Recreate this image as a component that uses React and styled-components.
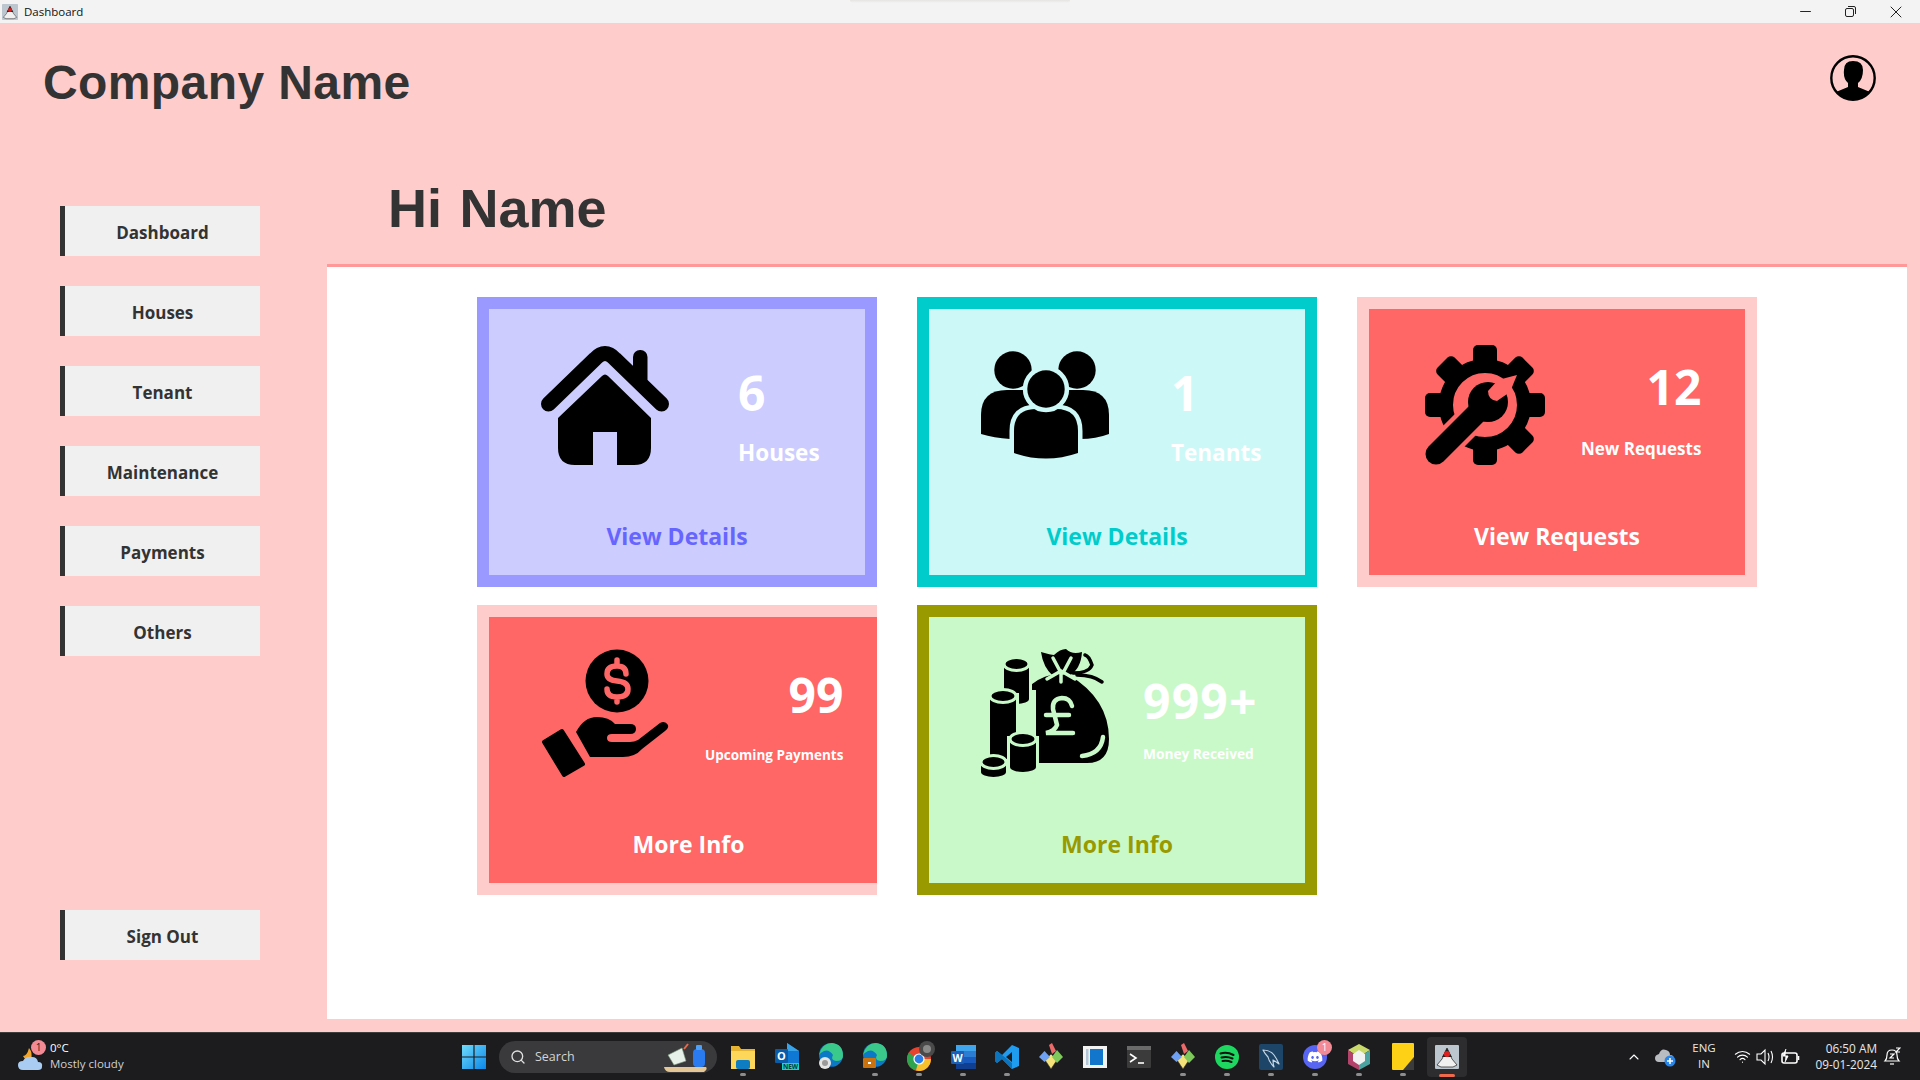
import React from "react";
import styled, { createGlobalStyle } from "styled-components";
import { FaDiscord, FaSpotify } from "react-icons/fa";
import { Search, Minus, X, ChevronUp, Wifi } from "lucide-react";

const uiFont = `"Open Sans", "Noto Sans", sans-serif`;

const GlobalStyle = createGlobalStyle`
  html, body {
    margin: 0;
    padding: 0;
    width: 1920px;
    height: 1080px;
    overflow: hidden;
    font-family: ${uiFont};
  }
`;

const Screen = styled.div`
  width: 1920px;
  height: 1080px;
  display: flex;
  flex-direction: column;
`;

const TitleBar = styled.div`
  height: 23px;
  background: #f3f3f3;
  display: flex;
  align-items: center;
  padding-left: 2px;
  flex-shrink: 0;
  position: relative;

  &::after {
    content: "";
    position: absolute;
    top: 0;
    left: 850px;
    width: 220px;
    height: 3px;
    background: linear-gradient(#e6e4e2, #f3f3f3);
    border-radius: 0 0 6px 6px;
  }
`;

const TitleText = styled.span`
  font-size: 11.5px;
  color: #111;
  margin-left: 6px;
`;

const WindowButtons = styled.div`
  margin-left: auto;
  display: flex;
  align-items: center;
  padding-right: 2px;
  height: 100%;
`;

const WindowButton = styled.div`
  width: 45px;
  display: flex;
  align-items: center;
  justify-content: center;
  color: #222;
`;

const Main = styled.div`
  flex: 1;
  background: #ffcccc;
  display: flex;
  flex-direction: column;
  min-height: 0;
`;

const Header = styled.header`
  height: 144px;
  flex-shrink: 0;
  display: flex;
  justify-content: space-between;
  align-items: flex-start;
  padding: 32px 43px 0 43px;
  box-sizing: border-box;
`;

const Brand = styled.h1`
  margin: 0;
  font: bold 48px/55px "Liberation Sans", sans-serif;
  letter-spacing: 0.4px;
  color: #333;
`;

const Avatar = styled.svg`
  width: 46px;
  height: 46px;
  margin: 0 1px 0 0;
`;

const Body = styled.div`
  flex: 1;
  display: flex;
  min-height: 0;
`;

const Sidebar = styled.nav`
  width: 327px;
  flex-shrink: 0;
  box-sizing: border-box;
  padding: 39px 0 72px 60px;
  display: flex;
  flex-direction: column;
  gap: 30px;
`;

const NavButton = styled.button`
  width: 200px;
  height: 50px;
  box-sizing: border-box;
  border: 0;
  border-left: 5px solid #333;
  background: #f0f0f0;
  color: #333;
  font: bold 17px ${uiFont};
  padding: 2px 0 0;
  margin-top: ${(p) => (p.$bottom ? "auto" : "0")};
`;

const Content = styled.section`
  flex: 1;
  display: flex;
  flex-direction: column;
  margin: 0 13px 13px 0;
`;

const Greeting = styled.h2`
  margin: 0;
  height: 97px;
  box-sizing: border-box;
  padding: 10px 0 0 61px;
  font: bold 54px/62px "Liberation Sans", sans-serif;
  word-spacing: 2.5px;
  color: #333;
`;

const Panel = styled.div`
  flex: 1;
  background: #fff;
  border-top: 3px solid #ff9999;
  padding: 30px 0 0 150px;
  display: grid;
  grid-template-columns: repeat(3, 400px);
  grid-auto-rows: 290px;
  column-gap: 40px;
  row-gap: 18px;
  align-content: start;
`;

const Card = styled.article`
  box-sizing: border-box;
  width: 400px;
  height: 290px;
  background: ${(p) => p.$fill};
  border: 12px solid ${(p) => p.$frame};
  border-right-width: ${(p) => (p.$open ? "0" : "12px")};
  display: flex;
  flex-direction: column;
`;

const CardTop = styled.div`
  display: flex;
  align-items: flex-start;
  padding: 32px 0 0 52px;
`;

const IconSlot = styled.div`
  width: 128px;
  height: 128px;
  flex-shrink: 0;
  display: flex;
  align-items: center;
  justify-content: center;
`;

const Stat = styled.div`
  display: flex;
  flex-direction: column;
  align-items: ${(p) => (p.$end ? "flex-end" : "flex-start")};
  margin: ${(p) => p.$y}px 0 0 ${(p) => p.$x}px;
  gap: ${(p) => p.$gap}px;
  color: #fff;
  font-weight: 700;
  white-space: nowrap;
`;

const Count = styled.div`
  font-size: 48px;
  line-height: 1;
  letter-spacing: ${(p) => p.$track || 0}px;
`;

const Label = styled.div`
  font-size: ${(p) => p.$size}px;
  line-height: 1;
`;

const Action = styled.div`
  margin-top: auto;
  padding: 0 0 24px ${(p) => p.$shift || 0}px;
  text-align: center;
  color: ${(p) => p.$color};
  font-size: 23px;
  line-height: 30px;
  font-weight: 700;
`;

const Taskbar = styled.footer`
  height: 48px;
  flex-shrink: 0;
  box-sizing: border-box;
  background: #1c1c1f;
  border-top: 1px solid #3d3d3d;
  display: flex;
  align-items: center;
  position: relative;
`;

const Weather = styled.div`
  width: 452px;
  flex-shrink: 0;
  box-sizing: border-box;
  padding-left: 18px;
  display: flex;
  align-items: center;
  gap: 7px;
`;

const WeatherIcon = styled.div`
  position: relative;
  width: 25px;
  height: 30px;
  display: flex;
`;

const Badge = styled.span`
  position: absolute;
  top: ${(p) => p.$top}px;
  right: ${(p) => p.$right}px;
  width: 15px;
  height: 15px;
  border-radius: 50%;
  background: ${(p) => p.$color};
  color: ${(p) => p.$ink};
  font-size: 10px;
  line-height: 15px;
  text-align: center;
`;

const WeatherText = styled.div`
  display: flex;
  flex-direction: column;
  font-size: 11.5px;
  line-height: 16px;
  margin-top: -2px;
  color: #fff;
  span + span {
    color: #d0d0d0;
  }
`;

const TaskSlot = styled.div`
  width: 44px;
  height: 46px;
  flex-shrink: 0;
  display: flex;
  align-items: center;
  justify-content: center;
  position: relative;
  margin-left: ${(p) => p.$gap || 0}px;
`;

const ActiveBack = styled.div`
  position: absolute;
  inset: 3px 2px;
  background: #2d2d30;
  border-radius: 4px;
`;

const ActiveIcon = styled.div`
  position: relative;
  display: flex;
`;

const RunDot = styled.span`
  position: absolute;
  left: 50%;
  bottom: ${(p) => (p.$active ? "3px" : "4px")};
  transform: translateX(-50%);
  width: ${(p) => (p.$active ? "16px" : "6px")};
  height: 3px;
  border-radius: 2px;
  background: ${(p) => (p.$active ? "#f0694a" : "#8d8d8d")};
`;

const SearchPill = styled.div`
  width: 218px;
  height: 32px;
  margin-left: 3px;
  box-sizing: border-box;
  flex-shrink: 0;
  border-radius: 16px;
  background: #3a3a3d;
  display: flex;
  align-items: center;
  padding-left: 11px;
  color: #d4d4d4;
  font-size: 12.5px;
  gap: 9px;
`;

const SearchArt = styled.svg`
  margin-left: auto;
  margin-right: 5px;
`;

const Tray = styled.div`
  position: absolute;
  right: 0;
  top: 0;
  bottom: 0;
  width: 298px;
  box-sizing: border-box;
  padding-right: 18px;
  display: flex;
  align-items: center;
  color: #fff;
`;

const TraySlot = styled.div`
  width: ${(p) => p.$w}px;
  margin-left: ${(p) => p.$gap || 0}px;
  display: flex;
  justify-content: center;
  align-items: center;
  flex-shrink: 0;
`;

const Lang = styled.div`
  width: 36px;
  margin: -2px 0 0 8px;
  text-align: center;
  font-size: 11.5px;
  line-height: 16px;
  color: #e8e8e8;
`;

const Clock = styled.div`
  margin: -2px 0 0 auto;
  text-align: right;
  font-size: 11.8px;
  line-height: 16px;
  color: #e8e8e8;
`;

const ink = "#000";

const HouseIcon = () => (
  <svg width="128" height="120" viewBox="0 0 128 120">
    <path d="M7.5 59 54 14Q64 3 74 14L120.5 59" fill="none" stroke={ink} strokeWidth="15" strokeLinecap="round" />
    <rect x="92" y="5" width="14.5" height="36" rx="7" fill={ink} />
    <path d="M61 31Q64 28 67 31L110 73V103Q110 120 93 120H76V87H52V120H34Q17 120 17 103V73Z" fill={ink} />
  </svg>
);

const PeopleIcon = ({ bg }) => (
  <svg width="128" height="108" viewBox="0 0 128 108">
    <path d="M0 83V64Q0 39 26 39H102Q128 39 128 64V83Q115 88 99 88H29Q13 87 0 83Z" fill={ink} />
    <circle cx="32" cy="19" r="18.7" fill={ink} />
    <circle cx="96" cy="19" r="18.7" fill={ink} />
    <path d="M33 102V80Q33 58 55 58H75Q97 58 97 80V102Q65 113 33 102Z" fill={ink} stroke={bg} strokeWidth="9" paintOrder="stroke" />
    <circle cx="65" cy="38" r="18.7" fill={ink} stroke={bg} strokeWidth="9" paintOrder="stroke" />
  </svg>
);

const GearIcon = ({ bg }) => (
  <svg width="120" height="120" viewBox="0 0 120 120">
    {[0, 45, 90, 135, 180, 225, 270, 315].map((a) => (
      <rect key={a} x="48" y="0" width="24" height="22" rx="5" fill={ink} transform={`rotate(${a} 60 60)`} />
    ))}
    <circle cx="60" cy="60" r="39" fill="none" stroke={ink} strokeWidth="14" />
    <path d="M11 109 52 68" stroke={bg} strokeWidth="30" />
    <path d="M11 109 55 65" stroke={ink} strokeWidth="21" strokeLinecap="round" />
    <circle cx="63" cy="57" r="20" fill={ink} />
    <path d="M73 35 63 46Q63 55 72 56L85 47 92 30Z" fill={bg} />
  </svg>
);

const HandIcon = ({ bg }) => (
  <svg width="128" height="128" viewBox="0 0 128 128">
    <circle cx="76" cy="32" r="31.5" fill={ink} />
    <path d="M85 25Q85 17 76 17Q66 17 66 25Q66 31 76 32Q87 33 87 40Q87 48 76 48Q66 48 66 40M76 11V17M76 48V53" fill="none" stroke={bg} strokeWidth="5.5" strokeLinecap="round" />
    <path d="M3 93 21 82 42 115 23 126Z" fill={ink} stroke={ink} strokeWidth="4" strokeLinejoin="round" />
    <path d="M35 83Q43 68 56 68Q68 68 74 75H89Q95 75 95 80Q95 85 89 85H71Q66 85 66 89Q66 93 71 93H89Q93 93 97 91L119 74Q124 71 127 76Q128 79 124 82L101 100Q94 108 82 108H49Z" fill={ink} />
  </svg>
);

const Coin = ({ x, w, top, bot, bg }) => (
  <g>
    <path d={`M${x} ${top}V${bot}A${w / 2} 5 0 0 0 ${x + w} ${bot}V${top}Z`} fill={ink} stroke={bg} strokeWidth="6" paintOrder="stroke" />
    <ellipse cx={x + w / 2} cy={top} rx={w / 2} ry="6.5" fill={ink} stroke={bg} strokeWidth="3" />
  </g>
);

const BagIcon = ({ bg }) => (
  <svg width="128" height="128" viewBox="0 0 128 128">
    <path d="M44 41Q58 28 70 26H88Q128 50 128 90Q128 114 106 114H55V41Z" fill={ink} />
    <path d="M60 3Q70 6 73 6Q79 0 85 0Q91 6 101 3Q100 20 88 27H72Q62 18 60 3Z" fill={ink} />
    <path d="M72 9 80 24M90 9 82 24M66 30 80 22 94 30M80 24V33" fill="none" stroke={bg} strokeWidth="3.5" strokeLinecap="round" />
    <path d="M92 24Q108 24 111 16Q108 7 104 6M96 26Q112 26 121 33" fill="none" stroke={ink} strokeWidth="3.5" strokeLinecap="round" />
    <path d="M91 57Q89 49 81 49Q71 50 72 60L76 76Q74 82 65 84H92M65 66H88" fill="none" stroke={bg} strokeWidth="4.5" strokeLinecap="round" />
    <path d="M122 88Q120 105 101 107" fill="none" stroke={bg} strokeWidth="4.5" strokeLinecap="round" />
    <Coin x={23} w={25} top={15} bot={50} bg={bg} />
    <Coin x={9} w={26} top={47} bot={106} bg={bg} />
    <Coin x={29} w={26} top={90} bot={118} bg={bg} />
    <Coin x={0} w={25} top={113} bot={123} bg={bg} />
  </svg>
);

const UserAvatar = () => (
  <Avatar viewBox="0 0 46 46">
    <defs>
      <clipPath id="avatarClip">
        <circle cx="23" cy="23" r="22" />
      </clipPath>
    </defs>
    <circle cx="23" cy="23" r="21.7" fill="none" stroke="#000" strokeWidth="2.4" />
    <path d="M14 15Q14 6 23 6Q33 6 33 15Q33 24 28 28V32L40 37 34 46H12L6 37 18 32V28Q13 24 14 15Z" fill="#000" clipPath="url(#avatarClip)" />
  </Avatar>
);

const DukeIcon = ({ size = 24 }) => (
  <svg width={size} height={size} viewBox="0 0 24 24">
    <rect width="24" height="24" rx="1" fill="#bcc6cf" />
    <path d="M12 3 17 14 22 20 18 22H6L2 20 7 14Z" fill="#f0f0f0" stroke="#333" strokeWidth=".8" />
    <path d="M12 3 17 12H7Z" fill="#222" />
    <circle cx="12" cy="9" r="3" fill="#e02020" />
  </svg>
);

const FolderIcon = () => (
  <svg width="24" height="24" viewBox="0 0 24 24">
    <path d="M0 1H8L10 4H24V24H0Z" fill="#e7b432" />
    <path d="M0 6H24V24H0Z" fill="#fdd75a" />
    <rect x="5" y="15" width="14" height="9" rx="2" fill="#0f7dc2" />
  </svg>
);

const OutlookIcon = () => (
  <svg width="24" height="27" viewBox="0 0 24 27">
    <path d="M12 0 24 8V20H12Z" fill="#0f78d4" />
    <path d="M12 0 24 8H12Z" fill="#39a3e8" />
    <rect y="6" width="13" height="14" rx="1" fill="#0a5ca8" />
    <text x="6.5" y="17" textAnchor="middle" fontSize="11" fontWeight="700" fill="#fff" fontFamily={uiFont}>O</text>
    <rect x="7" y="20" width="17" height="7" fill="#1dd3c8" />
    <text x="15.5" y="26" textAnchor="middle" fontSize="6.5" fontWeight="700" fill="#083b48" fontFamily={uiFont}>NEW</text>
  </svg>
);

const EdgeIcon = ({ work }) => (
  <svg width="24" height="27" viewBox="0 0 24 27">
    <circle cx="12" cy="12" r="12" fill="#0c79c6" />
    <path d="M0 12Q3 0 13 0Q24 1 24 13Q24 18 17 18Q11 17 14 12Q10 6 5 8Q1 10 0 12Z" fill="#3bc98b" />
    <path d="M2 17Q8 22 15 24L6 23Z" fill="#0b4e96" />
    {work ? (
      <g>
        <rect x="0" y="15" width="13" height="10" rx="1" fill="#c9720e" />
        <rect x="5" y="19" width="3" height="2" fill="#fff" />
      </g>
    ) : (
      <g>
        <circle cx="6" cy="20" r="6" fill="#e4e4e4" />
        <circle cx="6" cy="20" r="3" fill="#9a9a9a" />
      </g>
    )}
  </svg>
);

const ChromeIcon = () => (
  <svg width="32" height="32" viewBox="-4 0 32 32">
    <circle cx="12" cy="18" r="12" fill="#e5442f" />
    <path d="M12 18 1.6 12A12 12 0 0 0 9 29.6Z" fill="#2fa44f" />
    <path d="M12 18H24A12 12 0 0 1 9 29.6Z" fill="#f6c02c" />
    <circle cx="12" cy="18" r="5.6" fill="#fff" />
    <circle cx="12" cy="18" r="4.4" fill="#2a7de8" />
    <circle cx="20" cy="8" r="8" fill="#4a4a4a" />
    <circle cx="20" cy="8" r="4" fill="#8a8a8a" />
  </svg>
);

const WordIcon = () => (
  <svg width="25" height="24" viewBox="0 0 25 24">
    <rect x="5" width="20" height="24" rx="1" fill="#2b7cd3" />
    <rect x="5" y="12" width="20" height="6" fill="#185abd" />
    <rect x="5" y="18" width="20" height="6" fill="#103f91" />
    <rect x="5" width="20" height="6" fill="#41a5ee" />
    <rect y="6" width="13" height="13" rx="1" fill="#1a5fb8" />
    <text x="6.5" y="16.5" textAnchor="middle" fontSize="10.5" fontWeight="700" fill="#fff" fontFamily={uiFont}>W</text>
  </svg>
);

const VsCodeIcon = () => (
  <svg width="24" height="24" viewBox="0 0 24 24">
    <path d="M17 0 24 3V21L17 24 7 14 2 18 0 16V8L2 6 7 10ZM17 7 11 12 17 17Z" fill="#1f9cf0" />
    <path d="M2 6 17 18V24L7 14 2 18 0 16V8Z" fill="#0b74bd" />
  </svg>
);

const GitIcon = () => (
  <svg width="24" height="30" viewBox="0 0 24 30">
    <path d="M12 12 18 18 12 27 6 18Z" fill="#f5e37a" stroke="#333" strokeWidth=".6" />
    <path d="M5.5 9 11 15 5.5 20 0 15Z" fill="#6ea1f4" />
    <path d="M18 8 24 15 18 21 13 15Z" fill="#7ec85c" />
    <path d="M10 3 13 1 17 9 13 12Z" fill="#ea6a6a" />
  </svg>
);

const WindowIcon = () => (
  <svg width="24" height="22" viewBox="0 0 24 22">
    <rect width="24" height="22" fill="#f2f2f2" />
    <rect x="7" y="3" width="13" height="16" fill="#1277cc" />
    <rect x="3" y="3" width="2.5" height="16" fill="#b4c7d8" />
  </svg>
);

const TerminalIcon = () => (
  <svg width="24" height="22" viewBox="0 0 24 22">
    <rect width="24" height="22" rx="1" fill="#3b3b3b" />
    <rect width="24" height="4" fill="#6a6a6a" />
    <path d="M3 8 9 12 3 16" fill="none" stroke="#fff" strokeWidth="1.6" />
    <path d="M11 17H17" stroke="#fff" strokeWidth="1.6" />
  </svg>
);

const SpotifyIcon = () => (
  <svg width="24" height="24" viewBox="0 0 24 24">
    <circle cx="12" cy="12" r="12" fill="#1ed760" />
    <path d="M5.5 8.5Q12 6.5 18.5 10M6.5 12.5Q12 11 17.5 13.5M7.5 16Q12 15 16.5 17" fill="none" stroke="#111" strokeWidth="2" strokeLinecap="round" />
  </svg>
);

const MysqlIcon = () => (
  <svg width="24" height="26" viewBox="0 0 24 26">
    <rect width="24" height="26" rx="2" fill="#1d4568" />
    <path d="M4 6Q11 6 15 11 18 15 20 20 16 17 14 16 14 20 15 23 10 18 9 13 6 10 4 6Z" fill="none" stroke="#c5d6e4" strokeWidth="1.2" strokeLinejoin="round" />
  </svg>
);

const DiscordTile = styled.div`
  width: 24px;
  height: 24px;
  border-radius: 50%;
  background: #5865f2;
  color: #fff;
  display: flex;
  align-items: center;
  justify-content: center;
  position: relative;
`;

const CubeIcon = () => (
  <svg width="22" height="26" viewBox="0 0 22 26">
    <path d="M11 0 22 6 11 13 0 6Z" fill="#c9d96a" />
    <path d="M0 6 11 13V26L0 20Z" fill="#b3436b" />
    <path d="M22 6 11 13V26L22 20Z" fill="#4aa3a0" />
    <path d="M11 6 17 10 11 14 5 10ZM5 10 11 14V21L5 17ZM17 10 11 14V21L17 17Z" fill="#f2f2f2" />
  </svg>
);

const StickyIcon = () => (
  <svg width="22" height="27" viewBox="0 0 22 27">
    <rect width="22" height="27" rx="1" fill="#fcd116" />
    <path d="M22 14V27H11Z" fill="#3b3b3b" />
  </svg>
);

const WinLogo = () => (
  <svg width="24" height="24" viewBox="0 0 24 24">
    <defs>
      <linearGradient id="winGrad" x1="0" y1="0" x2="1" y2="1">
        <stop offset="0" stopColor="#6fdcfb" />
        <stop offset="1" stopColor="#0a86e8" />
      </linearGradient>
    </defs>
    <path d="M0 0H11.4V11.4H0ZM12.6 0H24V11.4H12.6ZM0 12.6H11.4V24H0ZM12.6 12.6H24V24H12.6Z" fill="url(#winGrad)" />
  </svg>
);

const weatherGlyph = (
  <svg width="25" height="30" viewBox="0 0 25 30">
    <path d="M5 14Q9 14 11 6 15 11 13 17 9 21 5 14Z" fill="#f2a52a" />
    <path d="M5 28Q0 28 0 23 0 19 5 19 8 14 14 15 19 15 20 20 25 20 24 25 24 28 20 28Z" fill="#a9cdf2" />
  </svg>
);

const deskArt = (
  <SearchArt width="50" height="32" viewBox="0 0 50 32">
    <path d="M2 26H44Q46 28 42 31H8Q3 31 2 26Z" fill="#e3c796" />
    <path d="M6 14 20 7 24 20 12 24Z" fill="#e8f0ea" stroke="#7a9a7a" strokeWidth=".6" />
    <path d="M22 8 26 3" stroke="#e86a4a" strokeWidth="2" />
    <rect x="31" y="8" width="12" height="18" rx="4" fill="#2a7af0" />
    <rect x="34" y="4" width="6" height="5" rx="1" fill="#4da0f5" />
  </SearchArt>
);

const OneDriveGlyph = () => (
  <svg width="22" height="20" viewBox="0 0 22 20">
    <path d="M4 15Q0 15 0 11 0 8 4 7 6 1 11 3 15 4 15 8 19 8 19 12L17 15Z" fill="#b9bcc0" />
    <circle cx="15" cy="14" r="5.5" fill="#2a86e8" />
    <path d="M12 14H18M15 11V17" stroke="#fff" strokeWidth="1.6" />
  </svg>
);

const VolumeGlyph = () => (
  <svg width="20" height="18" viewBox="0 0 20 18" fill="none" stroke="#fff" strokeWidth="1.1">
    <path d="M2 6H6L10 2V16L6 12H2Z" />
    <path d="M13 5Q15 9 13 13M16 3Q19 9 16 15" />
  </svg>
);

const BatteryGlyph = () => (
  <svg width="20" height="16" viewBox="0 0 20 16" fill="none" stroke="#fff" strokeWidth="1.6">
    <rect x="2" y="4" width="15" height="10" rx="2" />
    <path d="M18.5 7V11" />
    <path d="M6 0 3 7H8L5 13" fill="#fff" strokeWidth="1" />
  </svg>
);

const BellGlyph = () => (
  <svg width="18" height="20" viewBox="0 0 18 20" fill="none" stroke="#fff" strokeWidth="1.2">
    <path d="M2 14Q4 12 4 8 4 3 9 3 14 3 14 8 14 12 16 14Z" />
    <path d="M7 17H11" />
    <path d="M7 7H11L7 11H11M13 1H17L13 5H17" />
  </svg>
);

const cards = [
  { frame: "#9999ff", fill: "#ccccff", color: "#6666ff", Icon: HouseIcon, count: "6", label: "Houses", labelSize: 22.5, x: 69, y: 28, gap: 25, action: "View Details" },
  { frame: "#00cccc", fill: "#ccf9f7", color: "#00cccc", Icon: PeopleIcon, count: "1", label: "Tenants", labelSize: 22.5, x: 62, y: 28, gap: 25, action: "View Details" },
  { frame: "#ffcccc", fill: "#ff6666", color: "#fff", Icon: GearIcon, count: "12", label: "New Requests", labelSize: 17, x: 32, y: 22, gap: 29, end: true, action: "View Requests" },
  { frame: "#ffcccc", fill: "#ff6666", color: "#fff", Icon: HandIcon, count: "99", label: "Upcoming Payments", labelSize: 13.5, x: 36, y: 22, gap: 30, end: true, action: "More Info", open: true, shift: 11 },
  { frame: "#999900", fill: "#c9f9c9", color: "#999900", Icon: BagIcon, count: "999+", track: 1.2, label: "Money Received", labelSize: 13.7, x: 34, y: 28, gap: 22, action: "More Info" },
];

const navItems = ["Dashboard", "Houses", "Tenant", "Maintenance", "Payments", "Others"];

const apps = [
  { key: "folder", icon: <FolderIcon />, run: true },
  { key: "outlook", icon: <OutlookIcon /> },
  { key: "edge", icon: <EdgeIcon /> },
  { key: "edgeWork", icon: <EdgeIcon work />, run: true },
  { key: "chrome", icon: <ChromeIcon />, run: true },
  { key: "word", icon: <WordIcon />, run: true },
  { key: "vscode", icon: <VsCodeIcon />, run: true },
  { key: "git", icon: <GitIcon /> },
  { key: "window", icon: <WindowIcon /> },
  { key: "terminal", icon: <TerminalIcon /> },
  { key: "git2", icon: <GitIcon />, run: true },
  { key: "spotify", icon: <SpotifyIcon />, run: true },
  { key: "mysql", icon: <MysqlIcon />, run: true },
  {
    key: "discord",
    icon: (
      <DiscordTile>
        <FaDiscord size={16} />
        <Badge $top={-5} $right={-5} $color="#f28b96" $ink="#fff">1</Badge>
      </DiscordTile>
    ),
    run: true,
  },
  { key: "cube", icon: <CubeIcon />, run: true },
  { key: "sticky", icon: <StickyIcon />, run: true },
];

const App = () => (
  <Screen>
    <GlobalStyle />
    <TitleBar>
      <DukeIcon size={16} />
      <TitleText>Dashboard</TitleText>
      <WindowButtons>
        <WindowButton>
          <Minus size={17} strokeWidth={1.4} />
        </WindowButton>
        <WindowButton>
          <svg width="11" height="11" viewBox="0 0 11 11" fill="none" stroke="#222">
            <rect x=".5" y="2.5" width="8" height="8" rx="1.5" />
            <path d="M3 .5H9Q10.5 .5 10.5 2V8" />
          </svg>
        </WindowButton>
        <WindowButton>
          <X size={20} strokeWidth={1.2} />
        </WindowButton>
      </WindowButtons>
    </TitleBar>
    <Main>
      <Header>
        <Brand>Company Name</Brand>
        <UserAvatar />
      </Header>
      <Body>
        <Sidebar>
          {navItems.map((item) => (
            <NavButton key={item}>{item}</NavButton>
          ))}
          <NavButton $bottom>Sign Out</NavButton>
        </Sidebar>
        <Content>
          <Greeting>Hi Name</Greeting>
          <Panel>
            {cards.map((c) => (
              <Card key={c.label} $frame={c.frame} $fill={c.fill} $open={c.open}>
                <CardTop>
                  <IconSlot>
                    <c.Icon bg={c.fill} />
                  </IconSlot>
                  <Stat $x={c.x} $y={c.y} $gap={c.gap} $end={c.end}>
                    <Count $track={c.track}>{c.count}</Count>
                    <Label $size={c.labelSize}>{c.label}</Label>
                  </Stat>
                </CardTop>
                <Action $color={c.color} $shift={c.shift}>{c.action}</Action>
              </Card>
            ))}
          </Panel>
        </Content>
      </Body>
    </Main>
    <Taskbar>
      <Weather>
        <WeatherIcon>
          {weatherGlyph}
          <Badge $top={-2} $right={-3} $color="#f28b96" $ink="#222">1</Badge>
        </WeatherIcon>
        <WeatherText>
          <span>0°C</span>
          <span>Mostly cloudy</span>
        </WeatherText>
      </Weather>
      <TaskSlot>
        <WinLogo />
      </TaskSlot>
      <SearchPill>
        <Search size={16} color="#e0e0e0" />
        Search
        {deskArt}
      </SearchPill>
      {apps.map((a, i) => (
        <TaskSlot key={a.key} $gap={i === 0 ? 4 : 0}>
          {a.icon}
          {a.run && <RunDot />}
        </TaskSlot>
      ))}
      <TaskSlot>
        <ActiveBack />
        <ActiveIcon>
          <DukeIcon />
        </ActiveIcon>
        <RunDot $active />
      </TaskSlot>
      <Tray>
        <TraySlot $w={24}>
          <ChevronUp size={16} strokeWidth={1.6} />
        </TraySlot>
        <TraySlot $w={24} $gap={8}>
          <OneDriveGlyph />
        </TraySlot>
        <Lang>
          ENG
          <br />
          IN
        </Lang>
        <TraySlot $w={20} $gap={10}>
          <Wifi size={17} strokeWidth={1.6} />
        </TraySlot>
        <TraySlot $w={20} $gap={3}>
          <VolumeGlyph />
        </TraySlot>
        <TraySlot $w={20} $gap={5}>
          <BatteryGlyph />
        </TraySlot>
        <Clock>
          06:50 AM
          <br />
          09-01-2024
        </Clock>
        <TraySlot $w={20} $gap={5}>
          <BellGlyph />
        </TraySlot>
      </Tray>
    </Taskbar>
  </Screen>
);

export default App;
